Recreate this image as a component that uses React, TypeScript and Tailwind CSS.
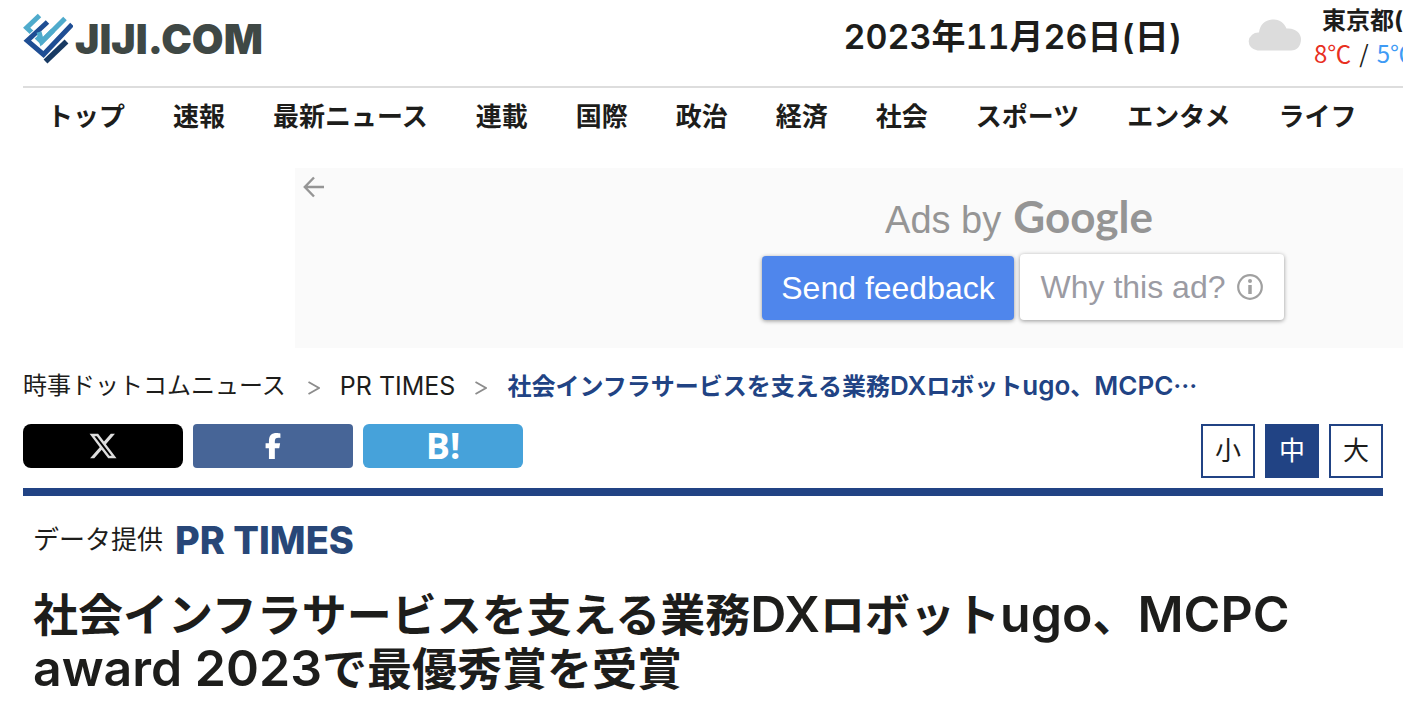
import type { ReactNode } from "react";
import { FaFacebookF, FaXTwitter } from "react-icons/fa6";

const navItems = [
  "トップ",
  "速報",
  "最新ニュース",
  "連載",
  "国際",
  "政治",
  "経済",
  "社会",
  "スポーツ",
  "エンタメ",
  "ライフ",
];

const sizes = [
  { label: "小", active: false },
  { label: "中", active: true },
  { label: "大", active: false },
];

function JijiMark() {
  return (
    <svg viewBox="0 0 50 52" className="h-[52px] w-[50px]" aria-hidden="true" fill="none" strokeWidth="5">
      <path d="M16.500 2.500 L3.700 14.700 L18.700 28.800 L42 5.500" stroke="#4fabcc" />
      <path d="M24.500 9 L4.300 27.700 L20.500 41.500 L49 12" stroke="#ffffff" strokeWidth="7" />
      <path d="M24.500 9 L4.300 27.700 L20.500 41.500 L49 11.500" stroke="#1f4e94" />
      <path d="M16 19 L18.700 28.800 L30 17.500" stroke="#4fabcc" />
      <path d="M22.500 48.500 L43.500 28.500" stroke="#183a63" strokeWidth="5.500" />
    </svg>
  );
}

/* Latin runs are set slightly larger than the kana and kanji around them. */
function Latin({ className, children }: { className: string; children: ReactNode }) {
  return <span className={className}>{children}</span>;
}

function Header() {
  return (
    <header className="ml-[23px] flex h-[88px] items-start overflow-hidden border-b-2 border-[#dddddd]">
      <a href="#" aria-label="JIJI.COM" className="mt-[13px] flex shrink-0 items-center gap-[2px] text-[#3f4845]">
        <JijiMark />
        <span className="font-['Inter'] text-[41px] leading-[52px] font-black">JIJI.COM</span>
      </a>
      <time
        dateTime="2023-11-26"
        className="mt-3 ml-auto shrink-0 text-[34px] leading-[50px] font-semibold whitespace-nowrap tabular-nums"
      >
        2023年11月26日(日)
      </time>
      <div className="ml-[66px] flex w-[155px] shrink-0">
        <svg viewBox="0 0 54 32" className="mt-[19px] h-8 w-[54px] shrink-0 fill-[#dcdcdc]" aria-label="くもり">
          <path d="M9.500 31.500 A9.500 9 0 0 1 11 13.500 C12 5 18 0.500 26 0.500 C32 0.500 36 4 38.500 9.500 C47 8.500 53 14 53 20 C53 27 49 31.500 43 31.500 Z" />
        </svg>
        <div className="ml-3 whitespace-nowrap">
          <p className="mt-[5px] pl-2 text-2xl leading-8 font-bold">東京都(東京)</p>
          <p className="font-['Noto_Sans_CJK_JP',sans-serif] text-[24px] leading-8">
            <span className="text-[#e8301f]">8℃</span>
            <span className="mx-2">/</span>
            <span className="text-[#3f9bf5]">5℃</span>
          </p>
        </div>
      </div>
    </header>
  );
}

function Ad() {
  return (
    <section className="mt-[26px] flex h-[180px] overflow-hidden pl-[295px]">
      <div className="relative flex w-[1456px] shrink-0 flex-col items-center bg-[#fafafa] pt-[23px] font-['Liberation_Sans',sans-serif]">
        <button aria-label="戻る" className="absolute top-2 left-2">
          <svg viewBox="0 0 22 22" className="size-[22px]" fill="none" stroke="#959595" strokeWidth="2.400">
            <path d="M21 11H2.500M11 1.500L1.800 11L11 20.500" />
          </svg>
        </button>
        <p className="mr-2 flex h-[63px] items-baseline gap-3 text-[38px] leading-[50px] text-[#959595]">
          Ads by <span className="font-['Lato'] text-[44px] font-bold">Google</span>
        </p>
        <div className="flex items-end gap-[6px] text-[32px]">
          <button className="h-16 w-[252px] rounded-[4px] bg-[#4f86ec] text-white shadow-[0_1px_4px_rgba(0,0,0,0.4)]">
            Send feedback
          </button>
          <button className="flex h-[66px] w-[264px] items-center justify-center gap-3 rounded-[4px] bg-white text-[#9b9ba3] shadow-[0_1px_4px_rgba(0,0,0,0.4)]">
            Why this ad?
            <svg viewBox="0 0 26 26" className="size-[26px]" fill="none" stroke="#a0a0a0" aria-hidden="true">
              <circle cx="13" cy="13" r="11.800" strokeWidth="2.200" />
              <path d="M13 11v9" strokeWidth="3.500" />
              <circle cx="13" cy="7" r="2" fill="#a0a0a0" stroke="none" />
            </svg>
          </button>
        </div>
      </div>
    </section>
  );
}

function Separator() {
  return (
    <svg viewBox="0 0 12 14" className="mt-1 h-[14px] w-3" fill="none" stroke="#8c8c8c" strokeWidth="1.800" aria-hidden="true">
      <path d="M0.500 1L11 7L0.500 13" />
    </svg>
  );
}

export default function App() {
  return (
    <div
      lang="ja"
      className="min-h-screen overflow-hidden bg-white font-['Inter','Noto_Sans_CJK_JP',sans-serif] text-[#1d1d1b]"
    >
      <Header />
      <nav className="ml-[23px] flex h-[54px] items-center gap-12 overflow-hidden pt-1 pl-6 text-[26px] leading-10 font-bold whitespace-nowrap">
        {navItems.map((item) => (
          <a key={item} href="#">
            {item}
          </a>
        ))}
      </nav>
      <Ad />
      <main className="mr-5 ml-[23px]">
        <nav aria-label="パンくず" className="mt-5 flex h-9 items-center text-2xl leading-9 whitespace-nowrap">
          <a href="#">時事ドットコムニュース</a>
          <span className="mr-5 ml-[22px]">
            <Separator />
          </span>
          <a href="#" className="text-[25px]">
            PR TIMES
          </a>
          <span className="mx-5">
            <Separator />
          </span>
          <a href="#" className="font-semibold text-[#214384]">
            社会インフラサービスを支える業務<Latin className="text-[26px]">DX</Latin>ロボット
            <Latin className="text-[26px]">ugo</Latin>、<Latin className="text-[26px]">MCPC</Latin>
            <span className="font-['Noto_Sans_CJK_JP',sans-serif]">…</span>
          </a>
        </nav>
        <div className="mt-5 flex items-start gap-[10px] border-b-8 border-[#214384] pb-[10px] text-white">
          <button aria-label="Xでシェア" className="flex h-11 w-40 items-center justify-center rounded-lg bg-black">
            <FaXTwitter className="size-[30px] text-[#dddddd]" />
          </button>
          <button aria-label="Facebookでシェア" className="flex h-11 w-40 items-center justify-center rounded-[4px] bg-[#476597]">
            <FaFacebookF className="size-[26px]" />
          </button>
          <button
            aria-label="はてなブックマーク"
            className="h-11 w-40 rounded-[6px] bg-[#46a2da] font-['Open_Sans'] text-4xl leading-[44px] font-bold"
          >
            B!
          </button>
          <div className="ml-auto flex gap-[10px] text-[26px]">
            {sizes.map((s) => (
              <button
                key={s.label}
                className={
                  s.active
                    ? "size-[54px] border-2 border-[#214384] bg-[#214384] pb-[2px] text-white"
                    : "size-[54px] border-2 border-[#214384] bg-white pb-[2px] text-[#1d1d1b]"
                }
              >
                {s.label}
              </button>
            ))}
          </div>
        </div>
        <article className="px-[10px]">
          <p className="mt-6 flex items-center gap-3 text-[26px] leading-10">
            データ提供
            <a href="#" className="font-['Inter'] text-[38px] font-extrabold text-[#284778]">
              PR TIMES
            </a>
          </p>
          <h1 className="mt-7 text-[45px] leading-[52px] font-semibold">
            社会インフラサービスを支える業務<Latin className="text-[50px]">DX</Latin>ロボット
            <Latin className="text-[50px]">ugo</Latin>、<Latin className="text-[50px]">MCPC award 2023</Latin>
            で最優秀賞を受賞
          </h1>
        </article>
      </main>
    </div>
  );
}
